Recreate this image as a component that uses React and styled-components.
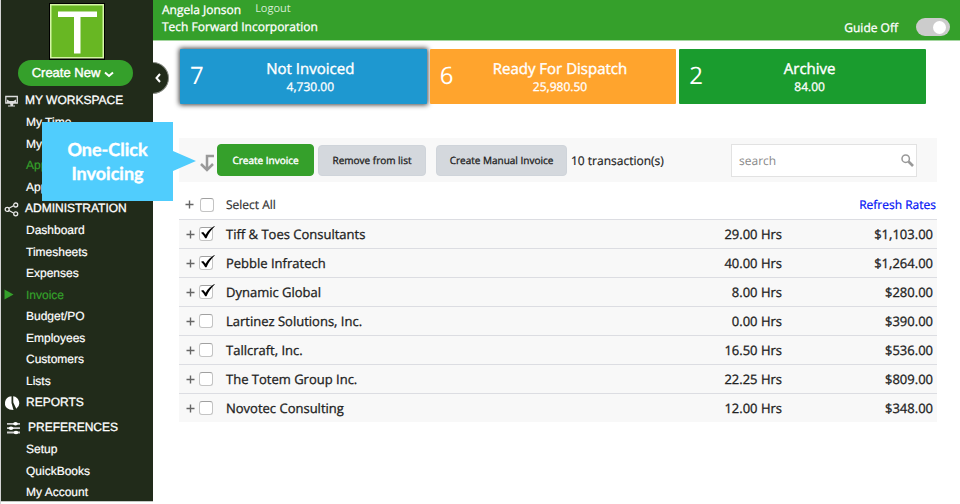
import { useState } from "react";
import styled, { createGlobalStyle } from "styled-components";

const GlobalStyle = createGlobalStyle`
  * {
    box-sizing: border-box;
  }
  body {
    margin: 0;
    background: #fff;
    color: #222;
    font-family: "Open Sans", sans-serif;
    font-size: 12px;
    text-rendering: geometricPrecision;
  }
  button, input {
    font-family: inherit;
    text-rendering: inherit;
  }
`;

const Page = styled.div`
  display: flex;
  align-items: flex-start;
  min-height: 100vh;
  border-left: 1px solid #d4d4d4;
`;

const Sidebar = styled.nav`
  position: relative;
  flex: 0 0 152px;
  height: calc(100vh - 3px);
  background: #212b1a;
  box-shadow: 0 1px 0 #c4c6c2;
  color: #fff;
  font-family: "Liberation Sans", sans-serif;
`;

const Brand = styled.div`
  display: flex;
  flex-direction: column;
  align-items: center;
  padding-top: 3px;
  margin-bottom: 3px;
`;

const Logo = styled.svg`
  display: block;
  width: 56px;
  height: 57px;
`;

const CreateNew = styled.button`
  display: flex;
  align-items: center;
  justify-content: center;
  gap: 4px;
  width: 115px;
  height: 26px;
  margin-right: 4px;
  padding: 0 4px 2px 0;
  border: none;
  border-radius: 13px;
  background: #35a02b;
  color: #fff;
  font-size: 13px;
  -webkit-text-stroke: 0.4px #fff;
  cursor: pointer;

  svg {
    position: relative;
    top: 2px;
  }
`;

const Handle = styled.button`
  position: absolute;
  top: 62px;
  left: 152px;
  width: 16px;
  height: 32px;
  padding: 0;
  border: 1px solid #8b8f88;
  border-left: none;
  border-radius: 0 16px 16px 0;
  background: #212b1a;
  cursor: pointer;

  svg {
    display: block;
    margin-left: 1px;
  }
`;

const Group = styled.section`
  margin-top: ${(props) => (props.$spaced ? "3px" : "0")};
`;

const GroupTitle = styled.h2`
  display: flex;
  align-items: center;
  gap: ${(props) => (props.$wide ? "8px" : "6px")};
  height: 22px;
  margin: 0;
  padding-left: 3px;
  font-size: 12px;
  font-weight: 400;
  -webkit-text-stroke: 0.3px #fff;

  svg {
    flex: none;
    position: relative;
    top: 1px;
  }
`;

const Menu = styled.ul`
  list-style: none;
  margin: 0;
  padding: 0;
`;

const MenuItem = styled.li`
  display: flex;
  align-items: center;
  height: 22px;
  padding-left: 3px;

  &:nth-child(even) {
    height: 21px;
  }
`;

const Marker = styled.span`
  width: 22px;
  display: flex;
`;

const MenuLink = styled.a`
  color: ${(props) => (props.$active ? "#35a02b" : "#fff")};
  font-size: 12px;
  text-decoration: none;
  -webkit-text-stroke: 0.2px currentColor;
`;

const Content = styled.div`
  flex: 1;
  min-width: 0;
`;

const TopBar = styled.header`
  display: flex;
  justify-content: space-between;
  height: 41px;
  padding: 1px 10px 0 9px;
  border-bottom: 1px solid #a5d6a0;
  background: #35a02b;
  color: #fff;
`;

const User = styled.div`
  display: flex;
  gap: 14px;
`;

const Line = styled.div`
  line-height: 17px;
  font-size: 12px;
  -webkit-text-stroke: 0.3px currentColor;
`;

const Logout = styled.a`
  color: #d6ecd3;
  font-size: 11px;
  line-height: 15px;
  text-decoration: none;
`;

const Guide = styled.label`
  display: flex;
  align-items: center;
  gap: 18px;
  padding-top: 13px;
  font-size: 12px;
  -webkit-text-stroke: 0.3px currentColor;
`;

const Toggle = styled.input`
  appearance: none;
  display: flex;
  align-items: center;
  justify-content: flex-end;
  width: 34px;
  height: 18px;
  margin: 0;
  padding-right: 4px;
  border-radius: 9px;
  background: #ccc;

  &::before {
    content: "";
    width: 13px;
    height: 13px;
    border-radius: 50%;
    background: #fff;
  }
`;

const Main = styled.main`
  padding: 8px 23px 0 26px;
`;

const Cards = styled.div`
  display: grid;
  grid-template-columns: repeat(3, 1fr);
  gap: 3px;
  margin: 0 11px 34px 1px;
`;

const Card = styled.button`
  display: flex;
  align-items: center;
  height: 55px;
  padding: 0 10px;
  border: none;
  border-radius: 1px;
  background: ${(props) => props.$color};
  box-shadow: ${(props) => (props.$selected ? "0 0 5px 1px #444" : "none")};
  color: #fff;
  cursor: pointer;
`;

const Count = styled.span`
  width: 20px;
  padding-bottom: 2px;
  font-size: 24px;
  line-height: 32px;
  text-align: left;
`;

const CardText = styled.span`
  display: flex;
  flex: 1;
  flex-direction: column;
  padding-right: 6px;
`;

const CardTitle = styled.span`
  font-size: 15px;
  line-height: 20px;
  -webkit-text-stroke: 0.4px currentColor;
`;

const CardValue = styled.span`
  font-size: 12px;
  line-height: 16px;
  -webkit-text-stroke: 0.3px currentColor;
`;

const Toolbar = styled.div`
  position: relative;
  display: flex;
  align-items: center;
  height: 44px;
  padding: 0 20px;
  background: #f8f8f8;
`;

const Callout = styled.div`
  position: absolute;
  top: -16px;
  left: -137px;
  width: 131px;
  padding: 15px 0 16px;
  background: #50cdfd;
  color: #fff;
  font-family: Lato, sans-serif;
  font-size: 18px;
  font-weight: 700;
  line-height: 24px;
  text-align: center;
  -webkit-text-stroke: 0.4px #fff;

  &::after {
    content: "";
    position: absolute;
    top: 29px;
    left: 131px;
    border-left: 23px solid #50cdfd;
    border-top: 10px solid transparent;
    border-bottom: 10px solid transparent;
  }
`;

const TurnArrow = styled.svg`
  flex: none;
  width: 16px;
  height: 18px;
  margin: 6px 2px 0 0;
`;

const Action = styled.button`
  flex: none;
  width: ${(props) => props.$width};
  height: ${(props) => (props.$primary ? "32px" : "31px")};
  margin-right: ${(props) => (props.$spaced ? "10px" : "4px")};
  padding: 0;
  border: 1px solid ${(props) => (props.$primary ? "#35a02b" : "#cfd4da")};
  border-radius: 4px;
  background: ${(props) => (props.$primary ? "#35a02b" : "#d4d8dd")};
  color: ${(props) => (props.$primary ? "#fff" : "#222")};
  font-size: 10px;
  white-space: nowrap;
  -webkit-text-stroke: ${(props) => (props.$primary ? "0.4px" : "0.3px")} currentColor;
  cursor: pointer;
`;

const Total = styled.span`
  flex: 1;
  font-size: 12px;
  white-space: nowrap;
  -webkit-text-stroke: 0.2px currentColor;
`;

const Search = styled.label`
  display: flex;
  align-items: center;
  width: 186px;
  height: 33px;
  padding: 0 2px 0 7px;
  border: 1px solid #e2e2e2;
  background: #fff;
`;

const SearchInput = styled.input`
  flex: 1;
  min-width: 0;
  padding: 0;
  border: none;
  outline: none;
  background: none;
  color: #222;
  font-size: 12px;

  &::placeholder {
    color: #888;
    opacity: 1;
  }
`;

const Table = styled.table`
  width: 100%;
  border-collapse: separate;
  border-spacing: 0;
`;

const HeadCell = styled.th`
  height: 37px;
  padding: 8px 1px 0 ${(props) => (props.$first ? "6px" : "0")};
  color: #333;
  font-size: 12px;
  font-weight: 400;
  text-align: ${(props) => props.$align || "left"};
  -webkit-text-stroke: 0.2px currentColor;
`;

const Cell = styled.td`
  width: ${(props) => props.$width || "auto"};
  height: 29px;
  padding: 0 4px 0 ${(props) => (props.$first ? "7px" : "0")};
  border-top: 1px solid #dcdde2;
  background: #f8f8f8;
  color: #222;
  font-size: 13px;
  text-align: ${(props) => props.$align || "left"};
  -webkit-text-stroke: 0.3px currentColor;
`;

const Picker = styled.div`
  display: flex;
  align-items: center;
  gap: ${(props) => (props.$head ? "6px" : "4px")};
`;

const Expand = styled.button`
  display: flex;
  padding: 0;
  border: none;
  background: none;
  cursor: pointer;
`;

const Tick = styled.label`
  position: relative;
  display: flex;

  svg {
    position: absolute;
    top: -1px;
    left: 1px;
    pointer-events: none;
  }
`;

const TickBox = styled.input`
  appearance: none;
  width: 14px;
  height: 14px;
  margin: 0;
  border: 1px solid #c4c4c4;
  border-top-color: #a0a0a0;
  border-radius: 3px;
  background: #fff;
`;

const RefreshLink = styled.a`
  color: #0010f5;
  text-decoration: none;
`;

const MonitorIcon = () => (
  <svg width="15" height="12" viewBox="0 0 15 12">
    <path d="M1.8 1.500h11.5v6.5H1.8z" fill="none" stroke="#ddd" strokeWidth="1.3" />
    <path d="M3 4.500l2.500 1.500h4l2.500-1.500v3.500H3z" fill="#ddd" />
    <path d="M6 8h3.500l-.5 2.500h-2.500zM4 10.400h7v1.200H4z" fill="#ddd" />
  </svg>
);

const ShareIcon = () => (
  <svg width="15" height="15" viewBox="0 0 15 15" fill="none" stroke="#e6e6e6" strokeWidth="1.300">
    <path d="M4.500 6.500l5-2.700M4.500 8.300l5 2.700" />
    <circle cx="3.200" cy="7.400" r="2" />
    <circle cx="11.700" cy="3" r="2" />
    <circle cx="11.700" cy="11.800" r="2" />
  </svg>
);

const ReportIcon = () => (
  <svg width="16" height="16" viewBox="0 0 16 16" fill="#fff">
    <path d="M7.500 1.200A6.900 6.900 0 0 0 5.600 14.600L9.500 15 7.500 8z" />
    <path d="M9.200 1.200A7 7 0 0 1 12.300 13.800L9.300 7.500z" />
  </svg>
);

const SlidersIcon = () => (
  <svg width="16" height="14" viewBox="0 0 16 14" fill="#fff">
    <path d="M3 2h13v1.800H3zM3 6.300h13v1.800H3zM3 10.600h13v1.800H3z" fill="#ccc" />
    <ellipse cx="11.500" cy="2.800" rx="2.300" ry="1.800" />
    <ellipse cx="7" cy="7.200" rx="2.300" ry="1.800" />
    <ellipse cx="12" cy="11.500" rx="2.300" ry="1.800" />
  </svg>
);

const CheckMark = () => (
  <svg width="15" height="14" viewBox="0 0 15 14">
    <path d="M1 6.800L3.200 6 5.600 8.800C7.700 5 10.600 2 14.400 0L14.700.500C11.300 3.500 8.600 7.300 6.500 12.200H5.200C4.100 10.100 2.800 8.300 1 6.800z" fill="#000" />
  </svg>
);

const PlusIcon = () => (
  <svg width="9" height="9" viewBox="0 0 9 9">
    <path d="M4.500 0.500v8M0.500 4.500h8" stroke="#666" strokeWidth="1.400" />
  </svg>
);

const MENU = [
  { title: "MY WORKSPACE", icon: <MonitorIcon />, items: ["My Time", "My Log", "Approve", "Apps"] },
  {
    title: "ADMINISTRATION",
    icon: <ShareIcon />,
    items: ["Dashboard", "Timesheets", "Expenses", "Invoice", "Budget/PO", "Employees", "Customers", "Lists"],
  },
  { title: "REPORTS", icon: <ReportIcon />, items: [] },
  { title: "PREFERENCES", icon: <SlidersIcon />, items: ["Setup", "QuickBooks", "My Account"], spaced: true },
];

const HIGHLIGHTED = ["Approve", "Invoice"];

const CARDS = [
  { count: 7, title: "Not Invoiced", value: "4,730.00", color: "#1e98d0" },
  { count: 6, title: "Ready For Dispatch", value: "25,980.50", color: "#ffa42d" },
  { count: 2, title: "Archive", value: "84.00", color: "#1a9c2e" },
];

const CLIENTS = [
  { name: "Tiff & Toes Consultants", hours: "29.00 Hrs", amount: "$1,103.00" },
  { name: "Pebble Infratech", hours: "40.00 Hrs", amount: "$1,264.00" },
  { name: "Dynamic Global", hours: "8.00 Hrs", amount: "$280.00" },
  { name: "Lartinez Solutions, Inc.", hours: "0.00 Hrs", amount: "$390.00" },
  { name: "Tallcraft, Inc.", hours: "16.50 Hrs", amount: "$536.00" },
  { name: "The Totem Group Inc.", hours: "22.25 Hrs", amount: "$809.00" },
  { name: "Novotec Consulting", hours: "12.00 Hrs", amount: "$348.00" },
];

export default function App() {
  const [selected, setSelected] = useState([0, 1, 2]);
  const [tab, setTab] = useState(0);
  const [search, setSearch] = useState("");

  const allSelected = selected.length === CLIENTS.length;

  const toggle = (i) => {
    setSelected(selected.includes(i) ? selected.filter((s) => s !== i) : [...selected, i]);
  };

  const toggleAll = () => {
    setSelected(allSelected ? [] : CLIENTS.map((_, i) => i));
  };

  return (
    <Page>
      <GlobalStyle />
      <Sidebar>
        <Brand>
          <Logo viewBox="0 0 56 57" role="img" aria-label="T">
            <path d="M0 0h56v57H0z" fill="#000" />
            <path d="M1 1h54v54.500H1z" fill="#d5f5a6" />
            <path d="M2.500 2.500h51v51.500h-51z" fill="#68b723" />
            <path d="M9 8.500h39v5.500H31.500v36.500h-6.500v-36.500H9z" fill="#fff" />
          </Logo>
          <CreateNew>
            Create New
            <svg width="10" height="7" viewBox="0 0 10 7">
              <path d="M1 1.500l4 3.500 4-3.500" fill="none" stroke="#fff" strokeWidth="2" />
            </svg>
          </CreateNew>
        </Brand>
        {MENU.map((group) => (
          <Group key={group.title} $spaced={group.spaced}>
            <GroupTitle $wide={group.spaced}>
              {group.icon}
              {group.title}
            </GroupTitle>
            <Menu>
              {group.items.map((item) => (
                <MenuItem key={item}>
                  <Marker>
                    {item === "Invoice" && (
                      <svg width="10" height="11" viewBox="0 0 10 11">
                        <path d="M0.500 0.500l9 5-9 5z" fill="#35a02b" />
                      </svg>
                    )}
                  </Marker>
                  <MenuLink href="#" $active={HIGHLIGHTED.includes(item)}>
                    {item}
                  </MenuLink>
                </MenuItem>
              ))}
            </Menu>
          </Group>
        ))}
        <Handle aria-label="Collapse menu">
          <svg width="8" height="10" viewBox="0 0 8 10">
            <path d="M6 1L2.500 5 6 9" fill="none" stroke="#fff" strokeWidth="2" />
          </svg>
        </Handle>
      </Sidebar>

      <Content>
        <TopBar>
          <div>
            <User>
              <Line>Angela Jonson</Line>
              <Logout href="#">Logout</Logout>
            </User>
            <Line>Tech Forward Incorporation</Line>
          </div>
          <Guide>
            Guide Off
            <Toggle type="checkbox" role="switch" />
          </Guide>
        </TopBar>

        <Main>
          <Cards>
            {CARDS.map((card, i) => (
              <Card key={card.title} $color={card.color} $selected={tab === i} onClick={() => setTab(i)}>
                <Count>{card.count}</Count>
                <CardText>
                  <CardTitle>{card.title}</CardTitle>
                  <CardValue>{card.value}</CardValue>
                </CardText>
              </Card>
            ))}
          </Cards>

          <Toolbar>
            <TurnArrow viewBox="0 0 16 18">
              <path d="M15 2H8v14M2 10l6 6 6-6" fill="none" stroke="#999" strokeWidth="2.500" />
            </TurnArrow>
            <Action $primary $width="97px">
              Create Invoice
            </Action>
            <Action $spaced $width="108px">
              Remove from list
            </Action>
            <Action $width="131px">Create Manual Invoice</Action>
            <Total>10 transaction(s)</Total>
            <Search>
              <SearchInput
                aria-label="search"
                placeholder="search"
                value={search}
                onChange={(e) => setSearch(e.target.value)}
              />
              <svg width="13" height="13" viewBox="0 0 13 13" fill="none" stroke="#999">
                <circle cx="4.700" cy="4.700" r="3.700" strokeWidth="1.500" />
                <path d="M7.500 7.500L12 12" strokeWidth="2.600" />
              </svg>
            </Search>
            <Callout>
              One-Click
              <br />
              Invoicing
            </Callout>
          </Toolbar>

          <Table>
            <thead>
              <tr>
                <HeadCell $first>
                  <Picker $head>
                    <Expand aria-label="Expand all">
                      <PlusIcon />
                    </Expand>
                    <Tick>
                      <TickBox id="all" type="checkbox" checked={allSelected} onChange={toggleAll} />
                      {allSelected && <CheckMark />}
                    </Tick>
                  </Picker>
                </HeadCell>
                <HeadCell>
                  <label htmlFor="all">Select All</label>
                </HeadCell>
                <HeadCell $align="right" colSpan={2}>
                  <RefreshLink href="#">Refresh Rates</RefreshLink>
                </HeadCell>
              </tr>
            </thead>
            <tbody>
              {CLIENTS.map((client, i) => (
                <tr key={client.name}>
                  <Cell $first $width="47px">
                    <Picker>
                      <Expand aria-label={`Expand ${client.name}`}>
                        <PlusIcon />
                      </Expand>
                      <Tick>
                        <TickBox
                          id={`client-${i}`}
                          type="checkbox"
                          checked={selected.includes(i)}
                          onChange={() => toggle(i)}
                        />
                        {selected.includes(i) && <CheckMark />}
                      </Tick>
                    </Picker>
                  </Cell>
                  <Cell>
                    <label htmlFor={`client-${i}`}>{client.name}</label>
                  </Cell>
                  <Cell $width="100px" $align="right">
                    {client.hours}
                  </Cell>
                  <Cell $width="151px" $align="right">
                    {client.amount}
                  </Cell>
                </tr>
              ))}
            </tbody>
          </Table>
        </Main>
      </Content>
    </Page>
  );
}
